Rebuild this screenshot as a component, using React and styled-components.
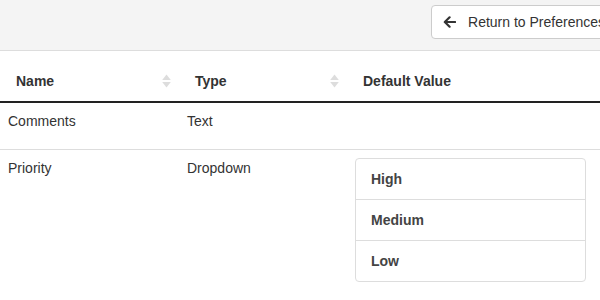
import React from "react";
import styled, { createGlobalStyle } from "styled-components";

const GlobalStyle = createGlobalStyle`
  html, body {
    margin: 0;
    padding: 0;
    overflow: hidden;
    background: #fff;
  }
  body {
    font-family: "Liberation Sans", Arial, sans-serif;
    font-size: 14px;
    line-height: 20px;
    color: #333;
  }
`;

const Page = styled.div`
  width: 618px;
`;

const TopBar = styled.div`
  display: flex;
  justify-content: flex-end;
  align-items: flex-start;
  box-sizing: border-box;
  height: 51px;
  padding-top: 5px;
  background: #f4f4f4;
  border-bottom: 1px solid #ddd;
`;

const Button = styled.button`
  display: inline-flex;
  align-items: center;
  gap: 12px;
  height: 34px;
  box-sizing: border-box;
  padding: 6px 12px 6px 11px;
  background: #fff;
  border: 1px solid #ccc;
  border-radius: 4px;
  font-family: "Liberation Sans", Arial, sans-serif;
  font-size: 14px;
  line-height: 20px;
  color: #333;
  white-space: nowrap;
  cursor: pointer;
`;

const Table = styled.table`
  width: 100%;
  margin-top: 10px;
  border-collapse: collapse;
  table-layout: fixed;
`;

const Th = styled.th`
  box-sizing: border-box;
  width: ${(p) => (p.$w ? `${p.$w}px` : "auto")};
  padding: 10px 8px 10px 16px;
  text-align: left;
  font-weight: bold;
  color: #333;
  border-bottom: 2px solid #222;
  vertical-align: middle;
`;

const HeadInner = styled.div`
  display: flex;
  align-items: center;
  justify-content: space-between;
`;

const Tr = styled.tr`
  border-bottom: 1px solid #ddd;
`;

const Td = styled.td`
  padding: 8px 8px ${(p) => p.$pb ?? 8}px 8px;
  vertical-align: top;
  color: #333;
`;

const ListGroup = styled.div`
  width: 229px;
  margin-bottom: 20px;
  border: 1px solid #ddd;
  border-radius: 4px;
  background: #fff;
`;

const ListItem = styled.div`
  padding: 10px 15px;
  font-weight: bold;
  color: #444;
  & + & {
    border-top: 1px solid #ddd;
  }
`;

const ArrowLeft = () => (
  <svg width="13" height="12" viewBox="0 0 13 12" aria-hidden="true">
    <path
      d="M12.2 6H2.2M6.6 1.3L1.8 6l4.8 4.7"
      fill="none"
      stroke="#333"
      strokeWidth="2.2"
      strokeLinecap="round"
      strokeLinejoin="round"
    />
  </svg>
);

const SortIcon = () => (
  <svg width="9" height="14" viewBox="0 0 9 14" aria-hidden="true">
    <path d="M4.5 0.5L8.8 6H0.2z" fill="#ddd" />
    <path d="M0.2 8H8.8L4.5 13.5z" fill="#ddd" />
  </svg>
);

export default function App() {
  return (
    <Page>
      <GlobalStyle />
      <TopBar>
        <Button>
          <ArrowLeft />
          Return to Preferences
        </Button>
      </TopBar>
      <Table>
        <thead>
          <tr>
            <Th $w={179}>
              <HeadInner>
                Name
                <SortIcon />
              </HeadInner>
            </Th>
            <Th $w={168}>
              <HeadInner>
                Type
                <SortIcon />
              </HeadInner>
            </Th>
            <Th>
              <HeadInner>Default Value</HeadInner>
            </Th>
          </tr>
        </thead>
        <tbody>
          <Tr>
            <Td $pb={18}>Comments</Td>
            <Td $pb={18}>Text</Td>
            <Td $pb={18}></Td>
          </Tr>
          <Tr>
            <Td>Priority</Td>
            <Td>Dropdown</Td>
            <Td>
              <ListGroup>
                <ListItem>High</ListItem>
                <ListItem>Medium</ListItem>
                <ListItem>Low</ListItem>
              </ListGroup>
            </Td>
          </Tr>
        </tbody>
      </Table>
    </Page>
  );
}
